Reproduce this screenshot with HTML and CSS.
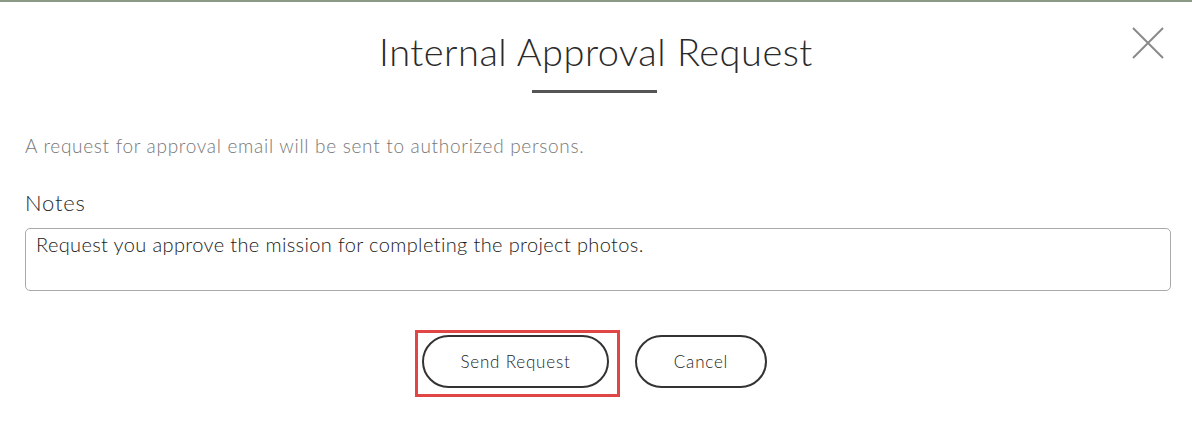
FILE: index.html
```html
<!DOCTYPE html>
<html lang="en">
<head>
<meta charset="utf-8">
<title>Internal Approval Request</title>
<link rel="stylesheet" href="styles.css">
</head>
<body>
<div class="dialog">
  <header class="dialog-header">
    <h1 class="dialog-title">Internal Approval Request</h1>
    <div class="title-bar"></div>
    <button class="close-btn" aria-label="Close">
      <svg width="32" height="32" viewBox="0 0 32 32"><path d="M1 1L31 31M31 1L1 31" stroke="#8a8a8a" stroke-width="2" fill="none"/></svg>
    </button>
  </header>
  <main class="dialog-body">
    <p class="description">A request for approval email will be sent to authorized persons.</p>
    <label class="notes-label" for="notes">Notes</label>
    <textarea id="notes" class="notes-input">Request you approve the mission for completing the project photos.</textarea>
    <div class="actions">
      <button class="pill-btn highlighted">Send Request</button>
      <button class="pill-btn cancel">Cancel</button>
    </div>
  </main>
</div>
</body>
</html>
```
FILE: styles.css
```css
* { box-sizing: border-box; }
html, body { margin: 0; padding: 0; background: #fff; }
body {
  font-family: Lato, "Noto Sans", sans-serif;
  color: #333;
  width: 1192px;
  height: 421px;
  overflow: hidden;
}
.dialog {
  border-top: 2px solid #8a9a86;
  height: 100%;
}
.dialog-header {
  position: relative;
  display: flex;
  flex-direction: column;
  align-items: center;
  padding-top: 26px;
}
.dialog-title {
  margin: 0;
  font-size: 38px;
  font-weight: 300;
  line-height: 46px;
  color: #2a2a2a;
  letter-spacing: 0.5px;
}
.title-bar {
  width: 125px;
  height: 3px;
  background: #555;
  margin-top: 16px;
  margin-right: 3px;
}
.close-btn {
  position: absolute;
  top: 25px;
  right: 28px;
  width: 32px;
  height: 32px;
  padding: 0;
  border: 0;
  background: transparent;
}
.close-btn svg { display: block; }
.dialog-body {
  display: flex;
  flex-direction: column;
  padding: 0 21px 0 25px;
}
.description {
  margin: 42px 0 0;
  font-size: 19px;
  font-weight: 300;
  line-height: 22px;
  letter-spacing: 0.7px;
  color: #777;
}
.notes-label {
  margin-top: 33px;
  font-size: 22px;
  font-weight: 300;
  line-height: 26px;
  letter-spacing: 0.8px;
  color: #2a2a2a;
}
.notes-input {
  margin-top: 12px;
  height: 63px;
  border: 1px solid #aaa;
  border-radius: 5px;
  padding: 3px 10px;
  font-family: Lato, "Noto Sans", sans-serif;
  font-size: 20px;
  font-weight: 300;
  line-height: 24px;
  letter-spacing: 0.37px;
  color: #1a1a1a;
  resize: none;
  outline: none;
}
.actions {
  display: flex;
  justify-content: center;
  gap: 26px;
  margin-top: 44px;
  padding-right: 7px;
}
.pill-btn {
  position: relative;
  height: 53px;
  border: 2px solid #333;
  border-radius: 27px;
  background: #fff;
  font-family: Lato, "Noto Sans", sans-serif;
  font-size: 17px;
  font-weight: 300;
  letter-spacing: 0.8px;
  color: #222;
  padding: 0;
}
.pill-btn.highlighted { width: 187px; }
.pill-btn.cancel { width: 132px; }
.pill-btn.highlighted::after {
  content: "";
  position: absolute;
  top: -7px;
  left: -9px;
  right: -13px;
  bottom: -11px;
  border: 3px solid #e04646;
  pointer-events: none;
}
```
